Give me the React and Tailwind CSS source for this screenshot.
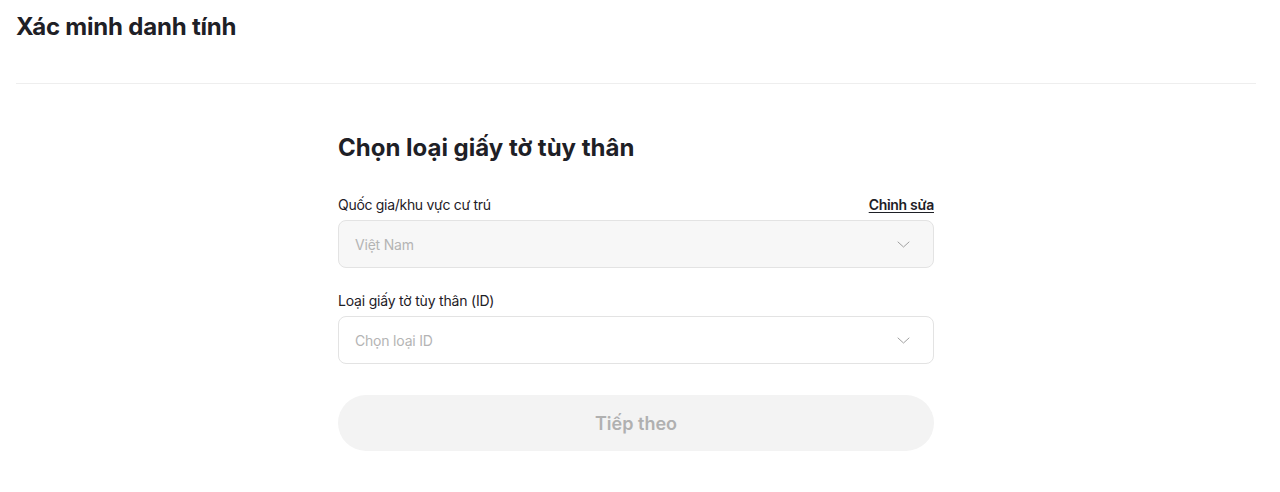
import React from 'react';

function Chevron() {
  return (
    <svg width="13" height="7" viewBox="0 0 13 7" fill="none" className="shrink-0">
      <path d="M1 1L6.5 6L12 1" stroke="#a0a0a0" strokeWidth="1" strokeLinecap="round" strokeLinejoin="round" />
    </svg>
  );
}

function SelectBox({ value, disabled }) {
  return (
    <div
      className={`flex h-[48px] items-center justify-between rounded-lg border border-[#e3e3e3] pl-4 pr-[23px] ${disabled ? 'bg-[#f7f7f7]' : 'bg-white'}`}
    >
      <span className="text-[14px] tracking-[-0.2px] text-[#b4b4b4]">{value}</span>
      <Chevron />
    </div>
  );
}

export default function App() {
  return (
    <div className="min-h-[492px] bg-white pl-4 pr-6 text-[#1e2026]" style={{ fontFamily: 'Inter, "Noto Sans", sans-serif' }}>
      <h1 className="pt-[11px] text-[24px] font-bold leading-[32px] tracking-[-0.2px]">Xác minh danh tính</h1>
      <div className="mt-[40px] h-px bg-[#eeeeee]" />

      <div className="mx-auto w-[596px] pt-[47px]">
        <h2 className="text-[24px] font-bold leading-[34px]">Chọn loại giấy tờ tùy thân</h2>

        <div className="mt-[29px] flex items-center justify-between">
          <span className="text-[14px] leading-[22px] tracking-[-0.3px]">Quốc gia/khu vực cư trú</span>
          <button className="text-[14px] font-semibold leading-[22px] tracking-[-0.3px] underline underline-offset-2">Chỉnh sửa</button>
        </div>
        <div className="mt-[4px]">
          <SelectBox value="Việt Nam" disabled />
        </div>

        <div className="mt-[22px] text-[14px] leading-[22px] tracking-[-0.2px]">Loại giấy tờ tùy thân (ID)</div>
        <div className="mt-[4px]">
          <SelectBox value="Chọn loại ID" />
        </div>

        <button
          disabled
          className="mt-[31px] flex h-[56px] w-full items-center justify-center rounded-full bg-[#f3f3f3] text-[18px] font-semibold text-[#b0b0b0]"
        >
          Tiếp theo
        </button>
      </div>
    </div>
  );
}
